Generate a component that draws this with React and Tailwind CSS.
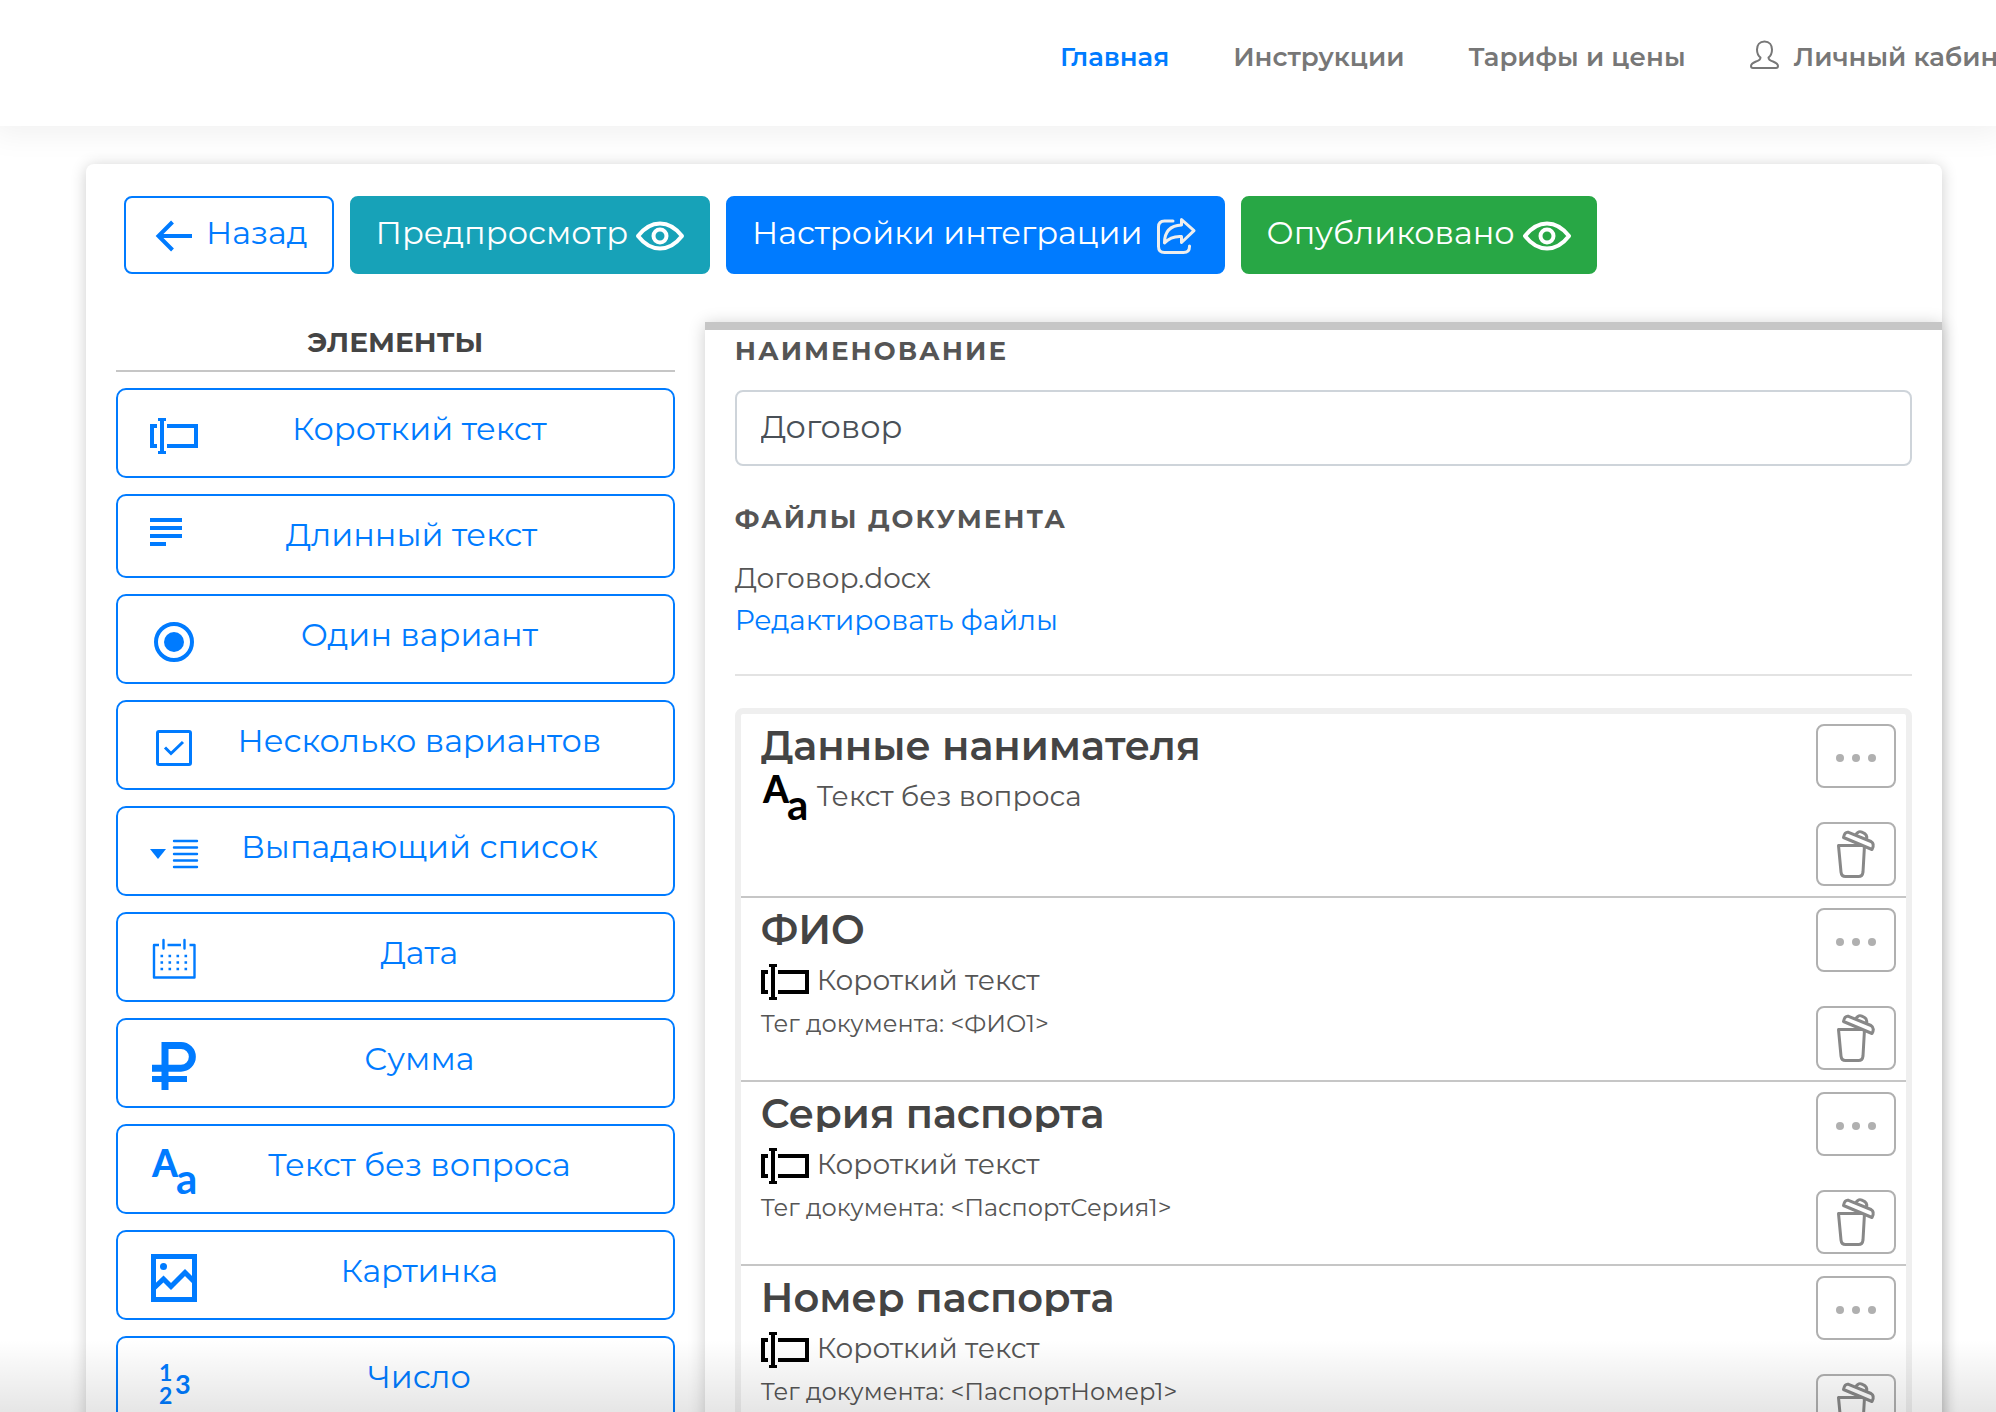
import React from "react";

const glyphFont = { fontFamily: "Lato, sans-serif" };

function Svg({ children, className = "size-12", box = "0 0 48 48", width = 3 }) {
  return (
    <svg viewBox={box} className={`shrink-0 overflow-visible ${className}`} fill="none" stroke="currentColor" strokeWidth={width} aria-hidden="true">
      {children}
    </svg>
  );
}

const ShortText = () => (
  <Svg width={4}>
    <path d="M7 14H2V34H7M17 14H46V34H17" />
    <path d="M8 7.5H16M8 40.5H16" strokeWidth="3" />
    <path d="M12 7V41" />
  </Svg>
);

const LongText = () => (
  <Svg className="h-[42px] w-8" box="0 0 32 42" width={4}>
    <path d="M0 2H32M0 10H32M0 18H32M0 26H16" />
  </Svg>
);

const Radio = () => (
  <Svg width={4}>
    <circle cx="24" cy="24" r="18" />
    <circle cx="24" cy="24" r="10" fill="currentColor" stroke="none" />
  </Svg>
);

const Check = () => (
  <Svg>
    <rect x="7.5" y="7.5" width="33" height="33" rx="1.5" />
    <path d="M15 23.5L21 29.5L33 18" />
  </Svg>
);

const Dropdown = () => (
  <Svg width={2.4}>
    <path d="M0 19H16L8 29Z" fill="currentColor" stroke="none" />
    <path d="M24 11H47M24 17.5H47M24 24H47M24 30.5H47M24 37H47" strokeLinecap="round" />
  </Svg>
);

const Calendar = () => (
  <Svg width={2.4}>
    <path d="M9 9H4V41.5H44.5V9H39.5M17.5 9H31" strokeLinejoin="round" />
    <path d="M13.5 4V12.5M34.5 4V12.5" strokeLinecap="round" />
    <path d="M10.5 20H38M10.5 26.5H38M10.5 33H38" strokeDasharray="2.6 5.4" strokeWidth="2.6" />
  </Svg>
);

const Ruble = () => (
  <Svg width={7}>
    <path d="M2 26.2H31A11.3 11.3 0 0 0 31 3.5H15V48" />
    <path d="M2 37H37" strokeWidth="6" />
  </Svg>
);

const Letters = () => (
  <Svg>
    <g fill="currentColor" stroke="none" style={glyphFont}>
      <text x="2" y="29" fontSize="37" fontWeight="900">A</text>
      <text x="26" y="46" fontSize="42" fontWeight="700">a</text>
    </g>
  </Svg>
);

const Picture = () => (
  <Svg width={5}>
    <rect x="3.5" y="2.5" width="41" height="43" />
    <circle cx="13.5" cy="12.5" r="3.5" fill="currentColor" stroke="none" />
    <path d="M4 34L13.5 25L21 32.5L35 18.5L44 27.5" />
  </Svg>
);

const Digits = () => (
  <Svg>
    <g fill="currentColor" stroke="none" fontWeight="700" style={glyphFont}>
      <text x="9" y="21" fontSize="23">1</text>
      <text x="9" y="44" fontSize="23">2</text>
      <text x="25" y="34" fontSize="27">3</text>
    </g>
  </Svg>
);

const Arrow = () => (
  <Svg width={4}>
    <path d="M42 24H8M22.5 10L8.5 24L22.5 38" />
  </Svg>
);

const Eye = () => (
  <Svg width={4}>
    <path d="M2 24C9 15 16 11.5 24 11.5S39 15 46 24C39 33 32 36.500 24 36.500S9 33 2 24Z" strokeLinejoin="round" />
    <circle cx="24" cy="24" r="6.5" />
  </Svg>
);

const Share = () => (
  <Svg className="size-12 text-[#eeeeee]">
    <path d="M22 9H13.5Q7.5 9 7.5 15V34.5Q7.5 40.5 13.5 40.5H32.5Q38.5 40.5 38.5 34.5V34" strokeLinecap="round" />
    <path d="M30.5 7.5L43 18.7L30.5 30.5V24.5C23 24 18 26 13.5 31C13.5 20 19 13.5 30.5 13Z" strokeLinejoin="round" />
  </Svg>
);

const User = () => (
  <Svg className="size-[30px]" box="0 0 30 30" width={2}>
    <path
      d="M14.5 1.5C9.5 1.5 7 5 7 9.5C7 13 8.5 16 10.5 17.5C10.5 19.5 9.5 20.5 6 21.5C2.5 23 1 24 1 26Q1 28 3 28H26Q28 28 28 26C28 24 26.5 23 23 21.5C19.5 20.5 18.5 19.5 18.5 17.5C20.5 16 22 13 22 9.5C22 5 19.5 1.5 14.5 1.5Z"
      strokeLinejoin="round"
    />
  </Svg>
);

const Trash = () => (
  <Svg className="size-12 text-[#888888]">
    <path d="M6.5 15.5H32.5L31 42Q30.5 46.5 26.5 46.5H13.5Q9.5 46.5 9 42Z" strokeLinejoin="round" />
    <path d="M11.5 7.5C12 4 14 1.5 16.5 2.3L39 11.5Q43 14 40 19.5Z" fill="white" strokeLinejoin="round" />
    <path d="M24 4.5C26 1 28 1.2 30.5 2.3C34 3.7 35.5 5.5 34.5 9" />
  </Svg>
);

const Dots = () => (
  <svg viewBox="0 0 40 8" className="mt-1 h-2 w-10" fill="currentColor" aria-hidden="true">
    <circle cx="4" cy="4" r="4" />
    <circle cx="20" cy="4" r="4" />
    <circle cx="36" cy="4" r="4" />
  </svg>
);

const nav = [
  { label: "Главная", active: true },
  { label: "Инструкции" },
  { label: "Тарифы и цены" },
  { label: "Личный кабинет", icon: true },
];

const elements = [
  ["Короткий текст", ShortText],
  ["Длинный текст", LongText],
  ["Один вариант", Radio],
  ["Несколько вариантов", Check],
  ["Выпадающий список", Dropdown],
  ["Дата", Calendar],
  ["Сумма", Ruble],
  ["Текст без вопроса", Letters],
  ["Картинка", Picture],
  ["Число", Digits],
];

const fields = [
  { title: "Данные нанимателя", type: "Текст без вопроса", Icon: Letters },
  { title: "ФИО", type: "Короткий текст", Icon: ShortText, tag: "ФИО1" },
  { title: "Серия паспорта", type: "Короткий текст", Icon: ShortText, tag: "ПаспортСерия1" },
  { title: "Номер паспорта", type: "Короткий текст", Icon: ShortText, tag: "ПаспортНомер1" },
];

function ToolButton({ className, before, after, children }) {
  return (
    <button type="button" className={`flex h-[78px] items-start gap-2 rounded-lg border-2 px-6 pt-[11px] text-[32px] leading-[48px] whitespace-nowrap ${className}`}>
      {before && <span className="mt-[3px]">{before}</span>}
      <span>{children}</span>
      {after && <span className="mt-[3px]">{after}</span>}
    </button>
  );
}

function IconButton({ label, children }) {
  return (
    <button type="button" aria-label={label} className="flex h-16 w-20 items-center justify-center rounded-lg border-2 border-[#b0b0b0] bg-white text-[#b0b0b0]">
      {children}
    </button>
  );
}

export default function App() {
  return (
    <div className="relative h-screen overflow-hidden bg-white font-[Montserrat,Inter,sans-serif] text-[#555555]">
      <header className="flex h-[126px] pt-9 shadow-[0_0_30px_8px_rgba(0,0,0,0.06)]">
        <nav className="ml-[53.1%] flex h-[42px] items-center gap-16 text-[26px] font-semibold whitespace-nowrap text-[#777777]">
          {nav.map((n) => (
            <a key={n.label} href="#" className={n.active ? "text-[#007bff]" : "flex items-center gap-[14px]"}>
              {n.icon && <span className="-mt-1"><User /></span>}
              {n.label}
            </a>
          ))}
        </nav>
      </header>

      <main className="mt-[38px] mr-[54px] ml-[86px] rounded-lg bg-white pt-8 shadow-[0_2px_16px_rgba(0,0,0,0.2)]">
        <div className="flex gap-4 pl-[38px]">
          <ToolButton className="border-[#007bff] bg-white text-[#007bff]" before={<Arrow />}>Назад</ToolButton>
          <ToolButton className="border-[#17a2b8] bg-[#17a2b8] text-white" after={<Eye />}>Предпросмотр</ToolButton>
          <ToolButton className="border-[#007bff] bg-[#007bff] text-white" after={<Share />}>Настройки интеграции</ToolButton>
          <ToolButton className="border-[#28a745] bg-[#28a745] text-white" after={<Eye />}>Опубликовано</ToolButton>
        </div>

        <div className="mt-12 flex">
          <aside className="w-1/3 px-[30px]">
            <h2 className="border-b-2 border-[#c6c6c6] pb-2 text-center text-[28px] leading-10 font-bold text-[#444444]">ЭЛЕМЕНТЫ</h2>
            <div className="mt-4 flex flex-col gap-4">
              {elements.map(([label, Icon]) => (
                <button key={label} type="button" className="flex items-start rounded-[10px] border-2 border-[#007bff] bg-white pt-[15px] pr-8 pb-4 pl-8 text-[32px] leading-[48px] text-[#007bff]">
                  <span className="mt-[7px] flex"><Icon /></span>
                  <span className="flex-1 text-center whitespace-nowrap">{label}</span>
                </button>
              ))}
            </div>
          </aside>

          <section className="w-2/3 border-t-8 border-[#c6c6c6] bg-white px-[30px] shadow-[0_2px_16px_rgba(0,0,0,0.2)]">
            <label htmlFor="doc-name" className="block text-[26px] leading-[42px] font-bold tracking-[2px]">НАИМЕНОВАНИЕ</label>
            <input id="doc-name" type="text" defaultValue="Договор" className="mt-[18px] block h-[76px] w-full rounded-lg border-2 border-[#ced4da] bg-white px-6 pb-1 text-[32px] text-[#495057]" />
            <h3 className="mt-8 text-[26px] leading-[42px] font-bold tracking-[2px]">ФАЙЛЫ ДОКУМЕНТА</h3>
            <p className="mt-[17px] text-[28px] leading-[42px]">Договор.docx</p>
            <a href="#" className="block text-[28px] leading-[42px] text-[#007bff]">Редактировать файлы</a>
            <hr className="mt-[33px] border-t-2 border-[#e3e3e3]" />

            <ul className="mt-8 rounded-lg border-[6px] border-[#efefef]">
              {fields.map(({ title, type, Icon, tag }) => (
                <li key={title} className="flex h-[184px] justify-between border-b-2 border-[#c6c6c6] pr-[10px] pl-5">
                  <div className="pt-[14px]">
                    <h4 className="overflow-hidden text-[40px] leading-9 font-semibold text-[#444444]">{title}</h4>
                    <div className="mt-[10px] flex h-12 items-center gap-2 text-black">
                      <Icon />
                      <span className="pb-1 text-[28px] leading-[42px] text-[#555555]">{type}</span>
                    </div>
                    {tag && <p className="text-2xl leading-9">Тег документа: &lt;{tag}&gt;</p>}
                  </div>
                  <div className="flex flex-col gap-[34px] pt-[10px]">
                    <IconButton label="Действия"><Dots /></IconButton>
                    <IconButton label="Удалить"><Trash /></IconButton>
                  </div>
                </li>
              ))}
            </ul>
          </section>
        </div>
      </main>

      <div className="pointer-events-none absolute inset-x-0 bottom-0 h-[72px] bg-gradient-to-b from-transparent to-black/10" />
    </div>
  );
}
